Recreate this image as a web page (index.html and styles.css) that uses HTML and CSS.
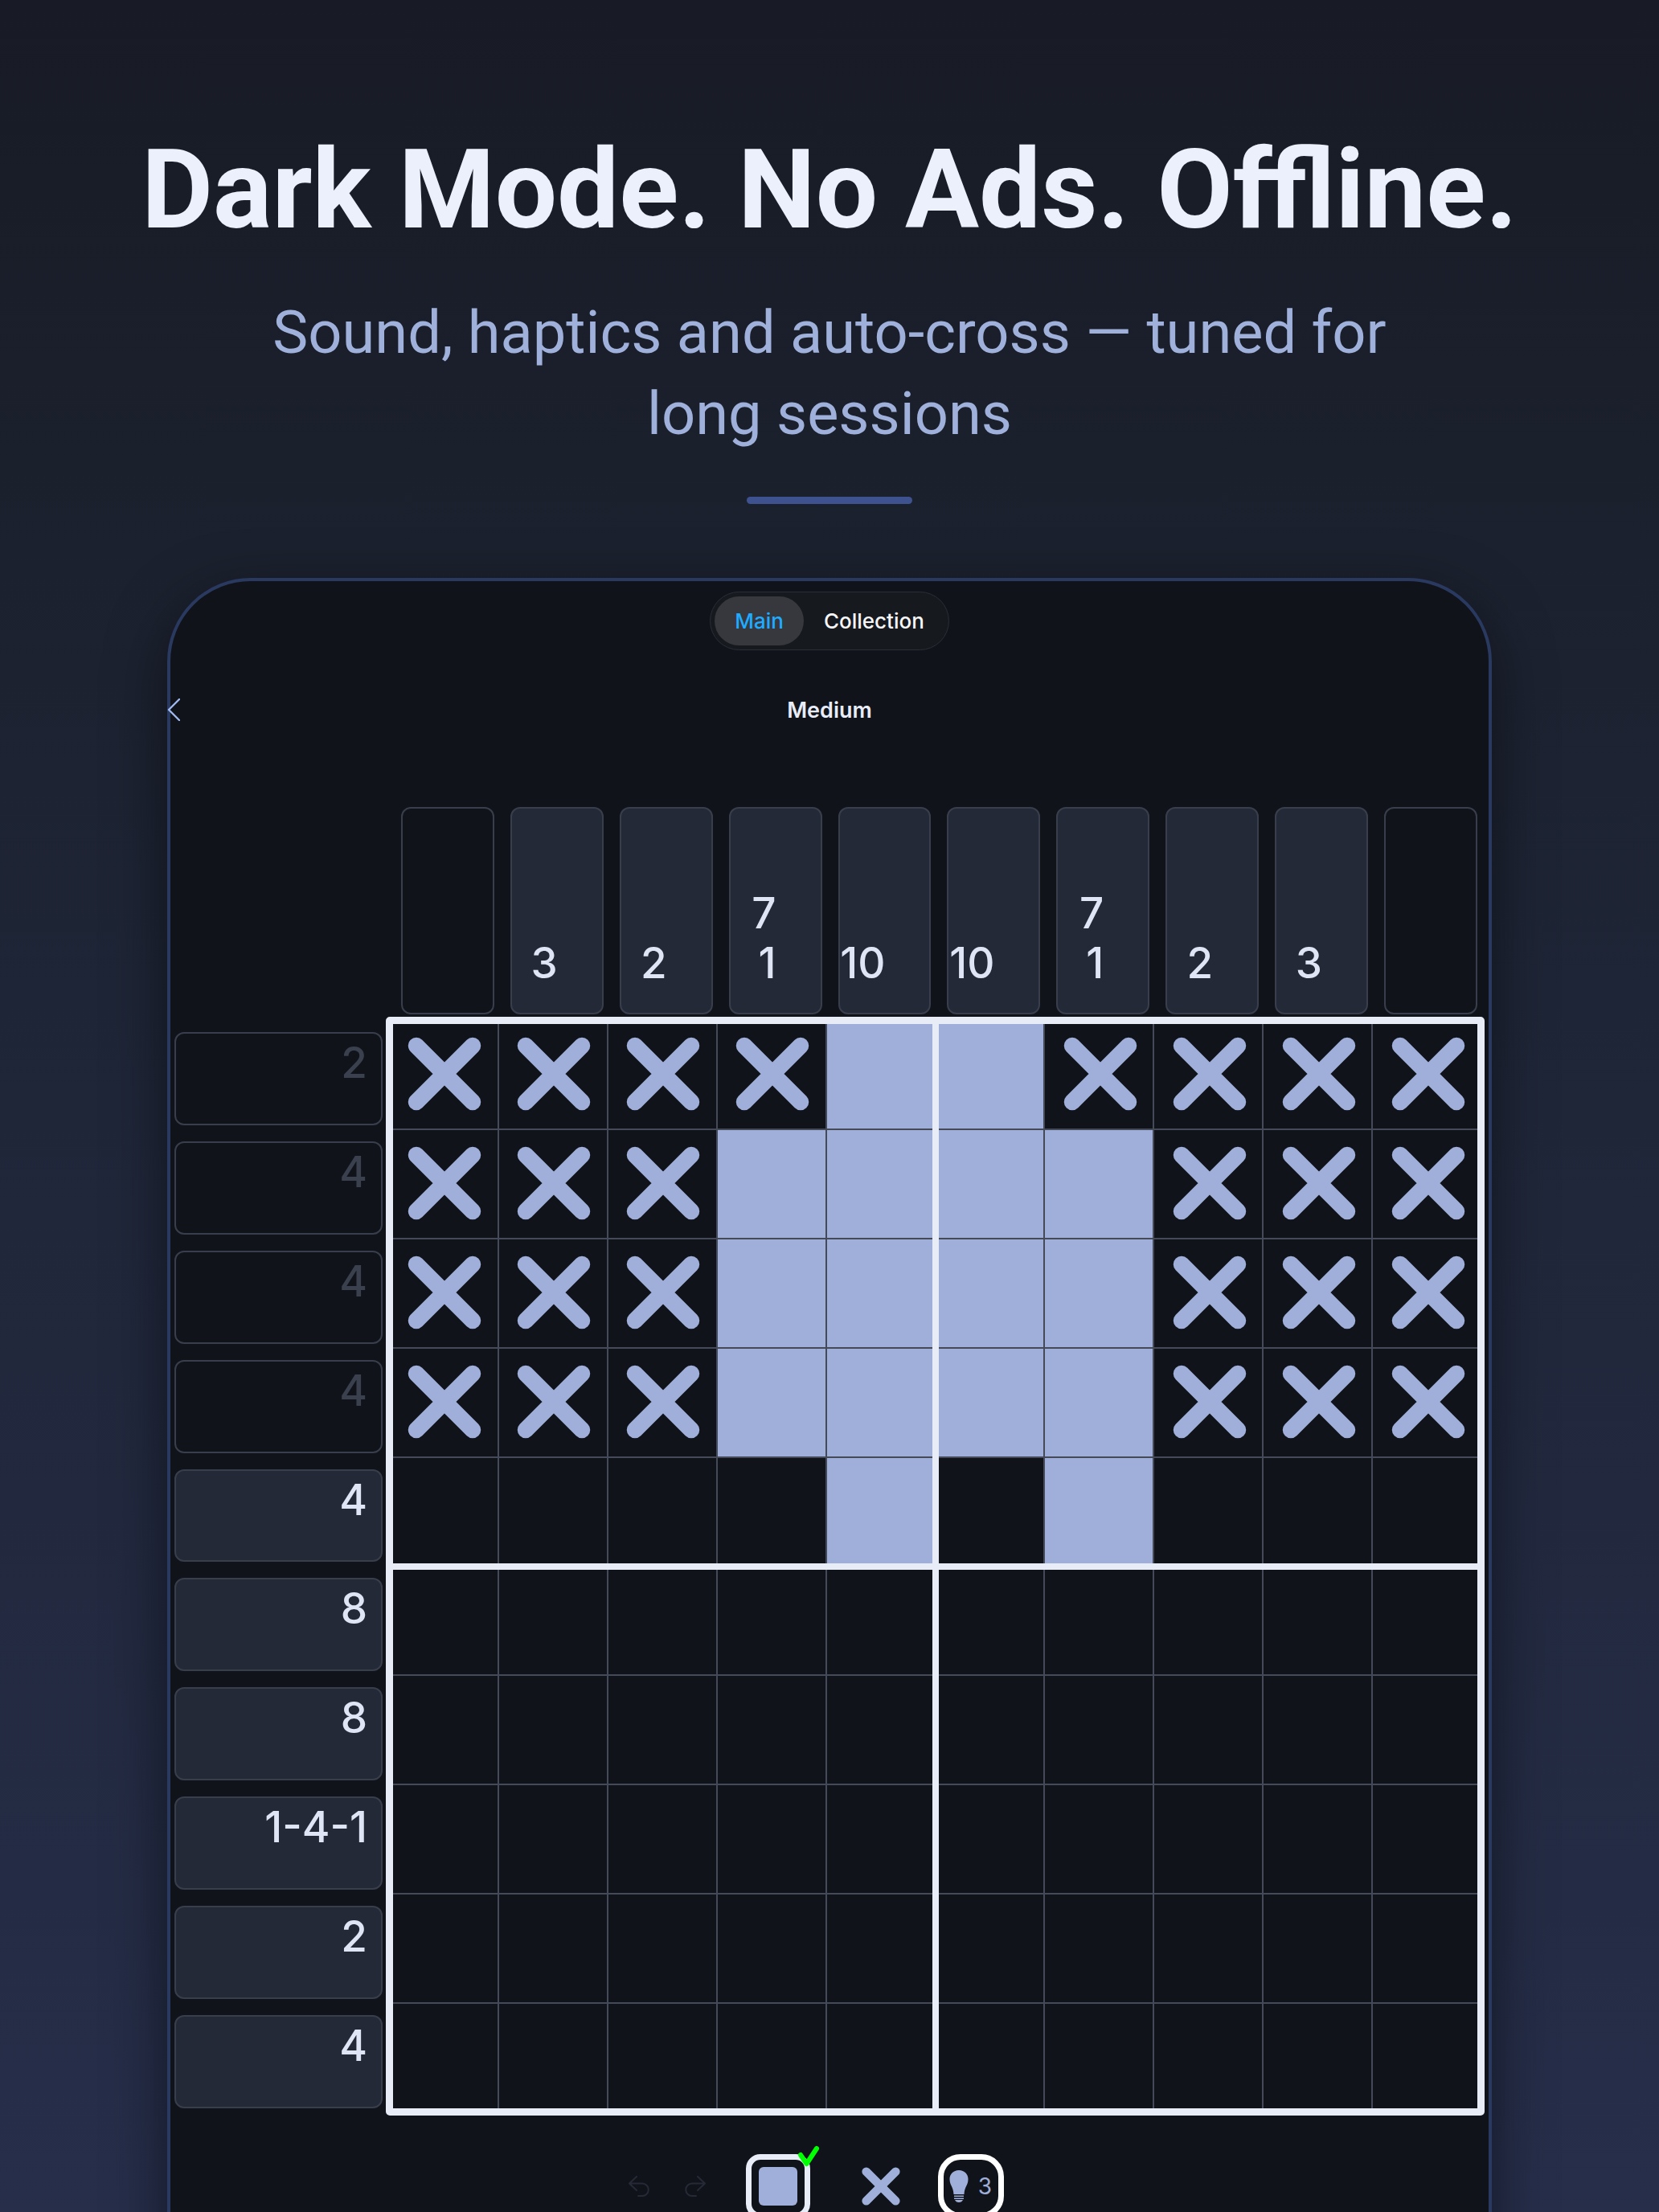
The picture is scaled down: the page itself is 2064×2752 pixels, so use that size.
FILE: index.html
```html
<!DOCTYPE html>
<html lang="en">
<head>
    <meta charset="UTF-8">
    <meta name="viewport" content="width=device-width, initial-scale=1.0">
    <title>Nonogram</title>
    <link rel="stylesheet" href="styles.css">
</head>
<body>
    <svg class="symbols" aria-hidden="true">
        <symbol id="cross" viewBox="0 0 92 92">
            <path d="M11 11 L81 81 M81 11 L11 81" fill="none" stroke="currentColor" stroke-width="20.5" stroke-linecap="round"/>
        </symbol>
    </svg>

    <header class="hero">
        <h1>Dark Mode. No Ads. Offline.</h1>
        <p>Sound, haptics and auto-cross — tuned for long sessions</p>
        <div class="divider"></div>
    </header>

    <main class="device">
        <nav class="tabs">
            <a href="#main" class="tab active">Main</a>
            <a href="#collection" class="tab">Collection</a>
        </nav>

        <div class="title-bar">
            <button class="back" aria-label="Back">
                <svg viewBox="0 0 16 28"><path d="M15 1 L2 14 L15 27" fill="none" stroke="currentColor" stroke-width="2.4" stroke-linecap="round" stroke-linejoin="round"/></svg>
            </button>
            <h2>Medium</h2>
        </div>

        <div class="puzzle">
            <div class="col-clues" id="colClues"></div>
            <div class="row-clues" id="rowClues"></div>
            <div class="board" id="board"></div>
        </div>

        <div class="toolbar">
            <button class="history" aria-label="Undo" disabled>
                <svg viewBox="0 0 26 26"><path d="M10 1 L1 9.500 L10 18 M1 9.500 H17 A7.700 7.700 0 0 1 17 25 H12" fill="none" stroke="currentColor" stroke-width="2" stroke-linecap="round" stroke-linejoin="round"/></svg>
            </button>
            <button class="history" aria-label="Redo" disabled>
                <svg viewBox="0 0 26 26"><path d="M16 1 L25 9.500 L16 18 M25 9.500 H9 A7.700 7.700 0 0 0 9 25 H14" fill="none" stroke="currentColor" stroke-width="2" stroke-linecap="round" stroke-linejoin="round"/></svg>
            </button>
            <button class="tool tool-fill" aria-label="Fill">
                <span class="swatch"></span>
                <svg class="check" viewBox="0 0 26 28"><path d="M3 12 L10.500 23 L23 4" fill="none" stroke="#00ff00" stroke-width="6" stroke-linecap="round" stroke-linejoin="round"/></svg>
            </button>
            <button class="tool tool-cross" aria-label="Cross">
                <svg viewBox="0 0 92 92"><use href="#cross"/></svg>
            </button>
            <button class="tool tool-hint" aria-label="Hints">
                <svg viewBox="0 0 24 40"><path d="M12 0 C5 0 0.500 5 0.500 11 C0.500 19 5 20 5.500 30 H18.500 C19 20 23.500 19 23.500 11 C23.500 5 19 0 12 0 Z M6 31.500 H18 V33 H6 Z M6 34.500 H18 V36 H6 Z M7 37 H17 C16 39 14.500 40 12 40 C9.500 40 8 39 7 37 Z" fill="currentColor"/></svg>
                <span>3</span>
            </button>
        </div>
    </main>

    <script src="script.js"></script>
</body>
</html>
```
FILE: styles.css
```css
* {
    box-sizing: border-box;
}
html {
    height: 100%;
    overflow: hidden;
}
body {
    margin: 0;
    height: 100%;
    overflow: hidden;
    font-family: Inter, Roboto, sans-serif;
    color: #e8ecf8;
    background: linear-gradient(180deg, #181b25 0%, #1b212e 25%, #20273a 55%, #262e4a 100%);
}
button {
    padding: 0;
    border: none;
    background: none;
    color: inherit;
    font: inherit;
    cursor: pointer;
}
svg {
    display: block;
}
.symbols {
    position: absolute;
    width: 0;
    height: 0;
}

/* Headline */
.hero {
    display: flex;
    flex-direction: column;
    align-items: center;
    padding-top: 154px;
    font-family: Roboto, sans-serif;
    text-align: center;
}
.hero h1 {
    margin: 0;
    font-size: 137px;
    line-height: 164px;
    font-weight: 700;
    color: #ecf0fc;
}
.hero p {
    margin: 45px 0 0;
    max-width: 1500px;
    font-size: 74px;
    line-height: 101px;
    color: #9fb0da;
}
.divider {
    width: 206px;
    height: 9px;
    margin-top: 53px;
    border-radius: 5px;
    background-color: #3d528f;
}

/* Device */
.device {
    margin: 92px 208px 0;
    border: 4px solid #2a3960;
    border-radius: 104px;
    padding: 13px 5px 140px;
    background-color: #10131a;
    box-shadow: 0 24px 72px rgba(0, 0, 0, 0.5);
}
.tabs {
    display: flex;
    width: max-content;
    margin: 0 auto;
    padding: 5px;
    border: 1px solid #2b2e38;
    border-radius: 37px;
    background-color: #16191d;
    font-size: 26px;
    font-weight: 500;
    line-height: 61px;
}
.tab {
    padding: 0 25px;
    border-radius: 31px;
    color: #f6f6f8;
    text-decoration: none;
}
.tab.active {
    background-color: #36383e;
    color: #1fabff;
}
.title-bar {
    display: grid;
    grid-template-columns: 1fr auto 1fr;
    align-items: center;
    height: 60px;
    margin: 44px -9px 0;
}
.title-bar h2 {
    margin: 0;
    font-size: 27px;
    font-weight: 600;
}
.back {
    justify-self: start;
    color: #9fb8ee;
}
.back svg {
    width: 16px;
    height: 28px;
}

/* Puzzle */
.puzzle {
    display: grid;
    grid-template-columns: 259px 1fr;
    grid-template-areas: ". cols" "rows board";
    column-gap: 8px;
    row-gap: 7px;
    margin: 91px 4px 0 0;
    font-size: 53px;
    font-weight: 500;
    line-height: 62px;
}
.col-clues {
    grid-area: cols;
    display: grid;
    grid-template-columns: repeat(10, 1fr);
    height: 258px;
}
.row-clues {
    grid-area: rows;
    display: grid;
    grid-template-rows: repeat(10, 1fr);
}
.clue {
    border: 2px solid #383e4b;
    border-radius: 12px;
    background-color: #232936;
    color: #dfe5f5;
    text-align: right;
}
.clue.empty,
.clue.done {
    background-color: transparent;
    color: #3a404d;
}
.col-clues .clue {
    display: flex;
    flex-direction: column;
    justify-content: flex-end;
    align-items: flex-end;
    margin: 0 5px 0 15px;
    padding: 0 55px 31px 0;
}
.row-clues .clue {
    margin: 15px 0 5px;
    padding: 5px 17px 0 0;
}
.board {
    grid-area: board;
    position: relative;
    display: grid;
    grid-template-columns: repeat(10, 1fr);
    grid-template-rows: repeat(10, minmax(0, 1fr));
    aspect-ratio: 1;
}
.cell {
    display: flex;
    align-items: center;
    justify-content: center;
    padding: 0 0 2px 3px;
    border: 1px solid #444a58;
    color: #9fafd9;
}
.cell.filled {
    background-color: #9fafd9;
}
.cell svg {
    width: 92px;
    height: 92px;
}
/* thick frame and the lines after every fifth cell */
.board::after {
    content: "";
    position: absolute;
    inset: -4px;
    border: 9px solid #e8ecf6;
    border-radius: 5px;
    background:
        linear-gradient(#e8ecf6, #e8ecf6) center / 8px 100% no-repeat,
        linear-gradient(#e8ecf6, #e8ecf6) center / 100% 8px no-repeat;
    pointer-events: none;
}

/* Toolbar */
.toolbar {
    display: flex;
    justify-content: center;
    align-items: center;
    margin-top: 52px;
    padding-right: 34px;
}
.history {
    margin-right: 44px;
    color: #262a36;
}
.history svg {
    width: 26px;
    height: 26px;
}
.tool {
    position: relative;
    display: flex;
    align-items: center;
    justify-content: center;
    height: 80px;
    color: #9fafd9;
}
.tool-fill {
    width: 80px;
    margin-left: 6px;
    border: 7px solid #e8ecf6;
    border-radius: 18px;
}
.swatch {
    width: 48px;
    height: 48px;
    border-radius: 6px;
    background-color: #9fafd9;
}
.check {
    position: absolute;
    top: -18px;
    right: -18px;
    width: 26px;
    height: 28px;
}
.tool-cross {
    margin: 0 47px 0 64px;
}
.tool-cross svg {
    width: 48px;
    height: 48px;
}
.tool-hint {
    width: 82px;
    gap: 12px;
    border: 7px solid #fff;
    border-radius: 28px;
    font-size: 28px;
}
.tool-hint svg {
    width: 24px;
    height: 40px;
}
```
FILE: script.js
```js
const colClues = [[], [3], [2], [7, 1], [10], [10], [7, 1], [2], [3], []];
const rowClues = ['2', '4', '4', '4', '4', '8', '8', '1-4-1', '2', '4'];

// x = crossed out, # = filled, . = untouched
const rows = [
    'xxxx##xxxx',
    'xxx####xxx',
    'xxx####xxx',
    'xxx####xxx',
    '....#.#...',
    '..........',
    '..........',
    '..........',
    '..........',
    '..........'
];

const cross = '<svg viewBox="0 0 92 92"><use href="#cross"/></svg>';

document.getElementById('colClues').innerHTML = colClues.map(function (clue) {
    const numbers = clue.map(n => '<span>' + n + '</span>').join('');
    return '<div class="clue' + (clue.length ? '' : ' empty') + '">' + numbers + '</div>';
}).join('');

document.getElementById('rowClues').innerHTML = rowClues.map(function (clue, i) {
    const done = !rows[i].includes('.');
    return '<div class="clue' + (done ? ' done' : '') + '">' + clue + '</div>';
}).join('');

document.getElementById('board').innerHTML = rows.join('').split('').map(function (mark, i) {
    const label = 'Row ' + (Math.floor(i / 10) + 1) + ', column ' + (i % 10 + 1);
    return '<button class="cell' + (mark === '#' ? ' filled' : '') + '" aria-label="' + label + '">' +
        (mark === 'x' ? cross : '') + '</button>';
}).join('');
```
